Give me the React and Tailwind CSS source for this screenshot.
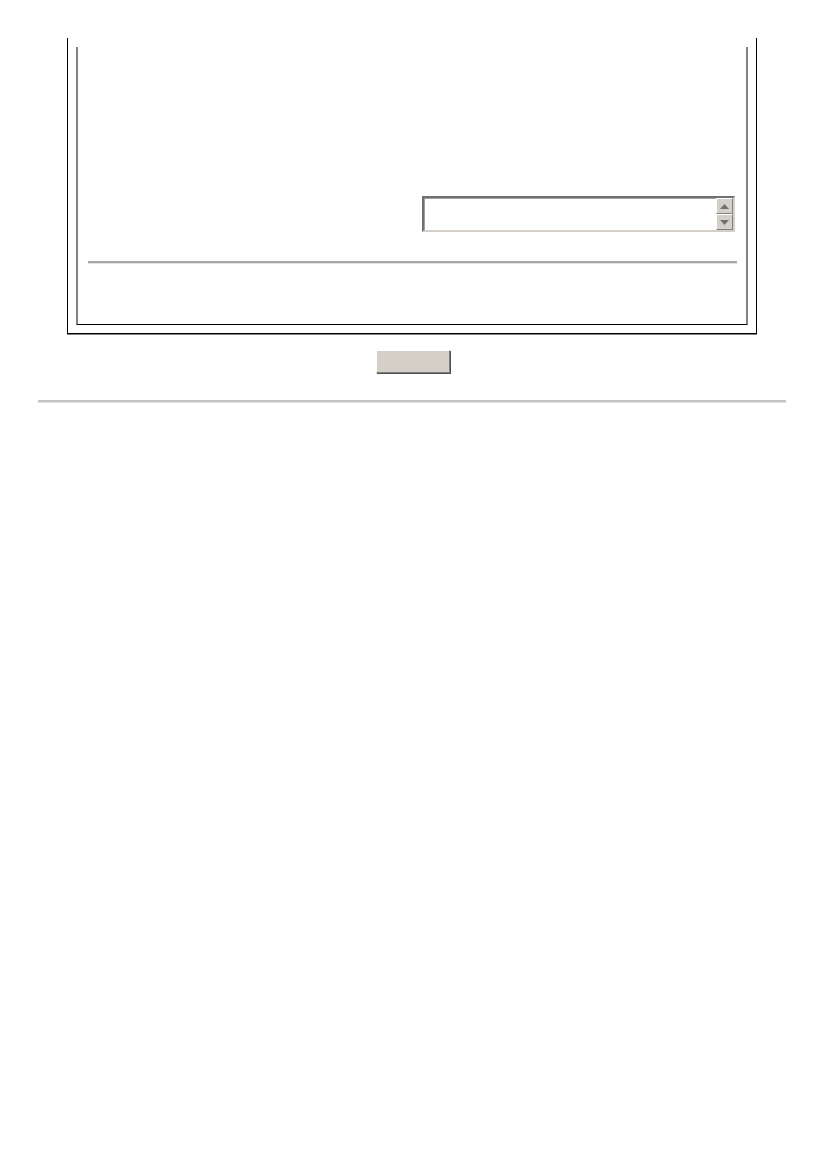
const ScrollButton = ({ up }) => (
  <div className="w-[17px] h-[17px] bg-[#d4d0c8] border border-t-white border-l-white border-r-[#808080] border-b-[#808080] flex items-center justify-center">
    <svg width="9" height="5" viewBox="0 0 9 5">
      {up ? (
        <polygon points="4.5,0 9,5 0,5" fill="#707070" />
      ) : (
        <polygon points="0,0 9,0 4.5,5" fill="#707070" />
      )}
    </svg>
  </div>
);

const App = () => {
  return (
    <div className="w-[826px] min-h-[1169px] bg-white pt-[38px] font-['Liberation_Sans',sans-serif]">
      {/* outer frame */}
      <div className="ml-[67px] w-[690px] border-l border-r border-b border-black shadow-[0_1px_0_#808080] pt-[9px] pb-[8px]">
        {/* inner frame */}
        <div className="ml-[8px] w-[672px] h-[278px] border-l-2 border-r-2 border-b border-l-[#808080] border-r-[#808080] border-b-black flex flex-col">
          <div className="h-[149px]" />
          <div className="flex justify-end pr-[11px]">
            <div className="w-[313px] h-[36px] bg-white border-2 border-t-[#707070] border-l-[#707070] border-r-[#d4d0c8] border-b-[#d4d0c8] shadow-[inset_1px_1px_0_#a0a0a0] flex justify-end">
              <div className="flex flex-col">
                <ScrollButton up />
                <ScrollButton />
              </div>
            </div>
          </div>
          <div className="mt-[29px] ml-[10px] mr-[9px] h-[3px] border-t-2 border-t-[#a8a8a8] border-b border-b-[#e0e0e0]" />
        </div>
      </div>

      <div className="flex justify-center mt-[16px]">
        <button className="w-[74px] h-[23px] bg-[#d4d0c8] border border-t-white border-l-white border-r-[#808080] border-b-[#808080] shadow-[1px_1px_0_#505050]" />
      </div>

      <div className="mt-[27px] ml-[38px] w-[748px] h-[3px] border-t-2 border-t-[#c4c4c4] border-b border-b-[#e0e0e0]" />
    </div>
  );
};

export default App;
